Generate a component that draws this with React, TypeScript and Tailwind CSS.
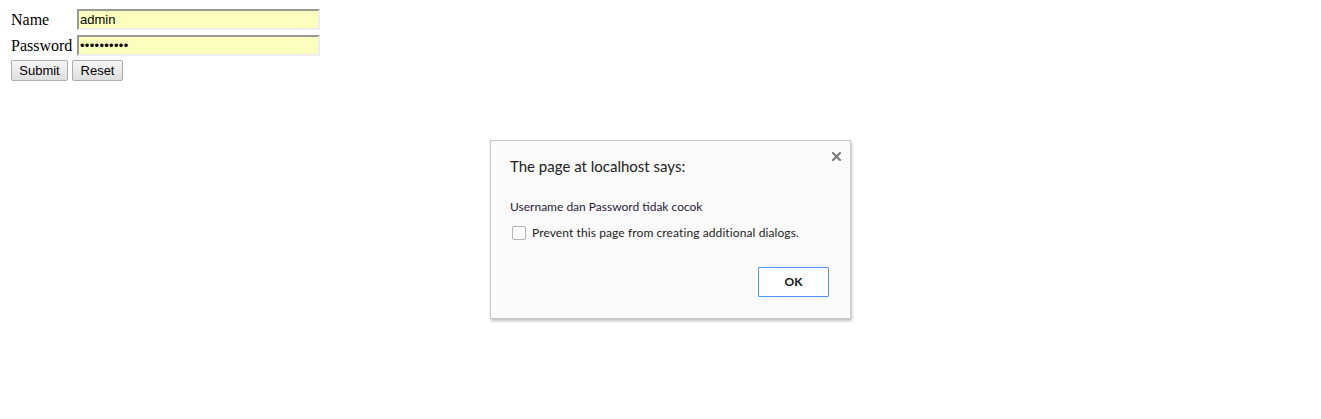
import React from 'react';

export default function App() {
  return (
    <div className="relative w-[1321px] h-[419px] bg-white overflow-hidden">
      <form className="pt-[9px] pl-[11px] flex flex-col" onSubmit={(event) => event.preventDefault()}>
        <div className="flex flex-col gap-[5px]">
          <div className="flex items-center h-[21px]">
            <label className="w-[66px] text-[16px] leading-none text-black font-['Liberation_Serif',serif]">Name</label>
            <input
              type="text"
              defaultValue="admin"
              className="w-[243px] h-[21px] px-[1px] text-[13px] text-black bg-[#fbffbd] border-2 border-t-[#999] border-l-[#999] border-b-[#eee] border-r-[#eee] outline-none font-['Liberation_Sans',Arial,sans-serif]"
            />
          </div>
          <div className="flex items-center h-[21px]">
            <label className="w-[66px] text-[16px] leading-none text-black font-['Liberation_Serif',serif]">Password</label>
            <input
              type="password"
              defaultValue="1234567890"
              className="w-[243px] h-[21px] px-[1px] text-[13px] tracking-[0.3px] text-black bg-[#fbffbd] border-2 border-t-[#999] border-l-[#999] border-b-[#eee] border-r-[#eee] outline-none font-['Liberation_Sans',Arial,sans-serif]"
            />
          </div>
        </div>
        <div className="flex gap-[4px] mt-[4px]">
          <button
            type="submit"
            className="w-[57px] h-[21px] text-[13px] leading-none text-black border border-[#adadad] rounded-[2px] bg-gradient-to-b from-[#f6f6f6] to-[#dedede] font-['Liberation_Sans',Arial,sans-serif]"
          >
            Submit
          </button>
          <button
            type="reset"
            className="w-[51px] h-[21px] text-[13px] leading-none text-black border border-[#adadad] rounded-[2px] bg-gradient-to-b from-[#f6f6f6] to-[#dedede] font-['Liberation_Sans',Arial,sans-serif]"
          >
            Reset
          </button>
        </div>
      </form>

      {/* alert dialog */}
      <div className="absolute left-[490px] top-[140px] w-[361px] h-[179px] bg-[#fbfbfb] border border-[#c8c8c8] shadow-[1px_2px_3px_rgba(0,0,0,0.25)] font-['Lato','Open_Sans',sans-serif]">
        <svg className="absolute right-[9px] top-[11px]" width="9" height="9" viewBox="0 0 9 9">
          <path d="M1 1 L8 8 M8 1 L1 8" stroke="#777" strokeWidth="2" strokeLinecap="square" />
        </svg>
        <div className="pl-[19px] pr-[20px] pt-[15px] flex flex-col">
          <div className="text-[15px] leading-[20px] text-[#222]">The page at localhost says:</div>
          <div className="mt-[23px] text-[12px] leading-[16px] text-[#2a1a3a]">Username dan Password tidak cocok</div>
          <label className="mt-[10px] flex items-center gap-[6px] text-[12px] leading-[16px] tracking-[0.1px] text-[#222]">
            <span className="ml-[2px] w-[14px] h-[14px] border border-[#b5b5b5] rounded-[2px] bg-white"></span>
            Prevent this page from creating additional dialogs.
          </label>
          <div className="mt-[26px] flex justify-end pr-[1px]">
            <button className="w-[71px] h-[30px] bg-white border border-[#4d90fe] rounded-[1px] text-[12px] font-bold text-[#111]">OK</button>
          </div>
        </div>
      </div>
    </div>
  );
}
